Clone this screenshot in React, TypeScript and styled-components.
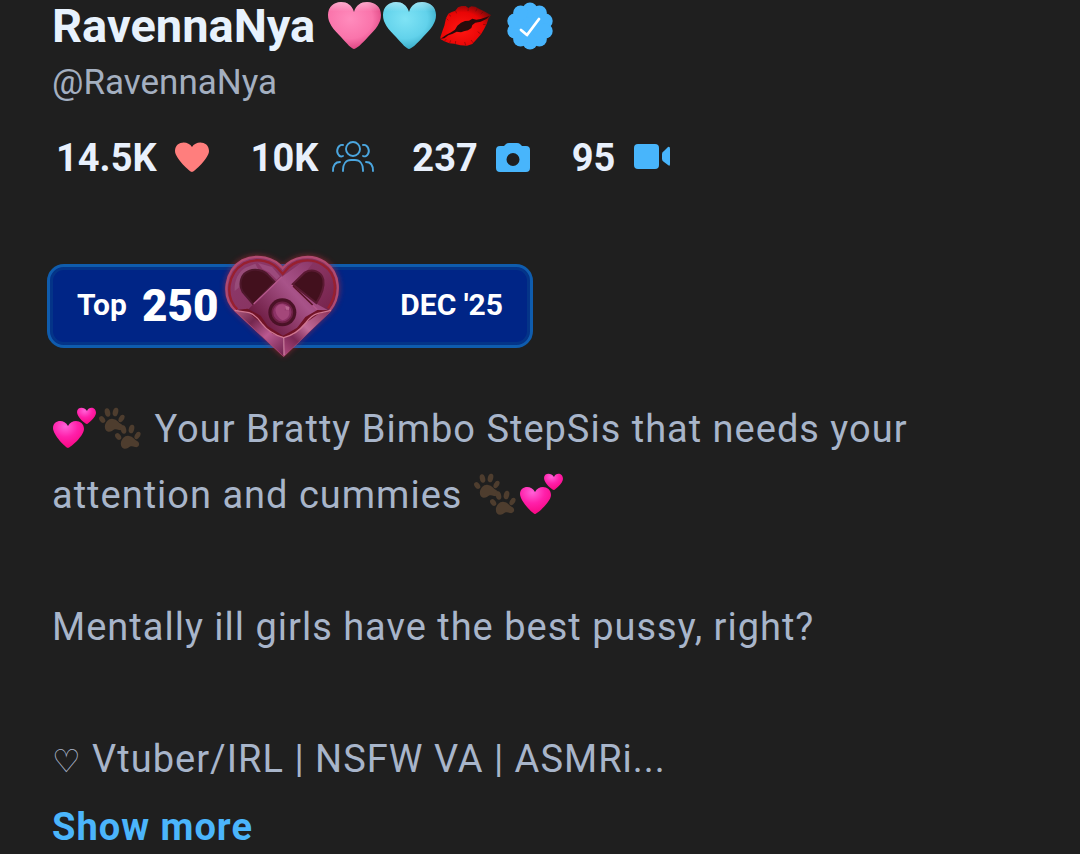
import React from 'react';
import styled, { createGlobalStyle } from 'styled-components';

const GlobalStyle = createGlobalStyle`
  body {
    margin: 0;
    background: #1f1f1f;
    color: #a8b5ca;
    font-family: Roboto, 'Noto Sans', 'DejaVu Sans', sans-serif;
  }
`;

const Profile = styled.main`
  padding: 0 47px;
`;

const Header = styled.header`
  padding: 0 5px;
`;

const Name = styled.h1`
  display: flex;
  align-items: center;
  margin: 0;
  color: #e8f2fd;
  font-size: 47px;
  line-height: 52px;
  font-weight: 700;
`;

const NameEmoji = styled.span`
  display: flex;
  margin: 0 14px 0 12px;
`;

const Handle = styled.p`
  margin: 0;
  color: #a4afc0;
  font-size: 35px;
  line-height: 62px;
`;

const Stats = styled.ul`
  display: flex;
  flex-wrap: wrap;
  gap: 0 38px;
  margin: 18px 0 0;
  padding: 0 4px;
  list-style: none;
`;

const Stat = styled.li`
  display: flex;
  align-items: center;
  gap: 14px;
  color: #e8f0fc;
  font-size: 38px;
  line-height: 52px;
  font-weight: 700;
`;

const StatIcon = styled.svg<{ $color: string }>`
  width: 42px;
  height: 36px;
  color: ${(p) => p.$color};
`;

const RankBadge = styled.section`
  box-sizing: border-box;
  display: flex;
  align-items: center;
  max-width: 486px;
  height: 84px;
  margin-top: 80px;
  padding: 0 27px;
  border: 3px solid #0f5cad;
  border-radius: 17px;
  background: #002586;
  box-shadow: inset 0 0 0 3px #043488;
  color: #fff;
  font-weight: 700;
`;

const RankLabel = styled.span`
  padding-bottom: 4px;
  font-size: 30px;
`;

const RankNumber = styled.strong`
  margin-left: 15px;
  font-size: 44px;
`;

const RankDate = styled(RankLabel)`
  margin-left: auto;
`;

const Gem = styled.svg`
  flex: none;
  width: 150px;
  height: 130px;
  margin: -24px -8px;
`;

const Bio = styled.section`
  margin-top: 48px;
  padding: 0 5px;
  font-size: 38px;
  line-height: 66px;
  letter-spacing: 1px;
`;

const BioText = styled.p`
  margin: 0 0 66px;

  &:last-of-type {
    margin-bottom: 0;
  }
`;

const SmallSymbol = styled.span`
  font-size: 32px;
`;

const Emoji = styled.svg`
  width: 45px;
  height: 44px;
  margin-right: 1px;
  vertical-align: -9px;
`;

const ShowMore = styled.a`
  display: inline-block;
  margin-top: 8px;
  color: #4bb5fb;
  font-weight: 700;
  line-height: 48px;
  text-decoration: none;
`;

const HEART =
  'M27 49C25 49 20 44 14 37C6 29 1 23 1 15C1 7 7 2 14 2C20 2 25 5 27 12C29 5 34 2 40 2C48 2 54 7 54 15C54 23 49 29 41 37C35 44 29 49 27 49Z';

function HeartEmoji({ id, label, colors }: { id: string; label: string; colors: string[] }) {
  return (
    <svg width="55" height="52" viewBox="0 0 55 52" role="img" aria-label={label}>
      <defs>
        <radialGradient id={id} cx="0.42" cy="0.36" r="0.7">
          <stop offset="0" stopColor={colors[0]} />
          <stop offset="0.6" stopColor={colors[1]} />
          <stop offset="1" stopColor={colors[2]} />
        </radialGradient>
        <linearGradient id={`${id}-shine`} x1="0" y1="0" x2="0" y2="1">
          <stop offset="0" stopColor="#fff" stopOpacity="0.4" />
          <stop offset="0.2" stopColor="#fff" stopOpacity="0" />
        </linearGradient>
      </defs>
      <path d={HEART} fill={`url(#${id})`} />
      <path d={HEART} fill={`url(#${id}-shine)`} />
    </svg>
  );
}

function KissEmoji() {
  return (
    <svg width="55" height="52" viewBox="352 0 165 156" role="img" aria-label="kiss mark">
      <defs>
        <radialGradient id="kiss" cx="0.42" cy="0.6" r="0.68">
          <stop offset="0" stopColor="#ff1712" />
          <stop offset="0.65" stopColor="#e80505" />
          <stop offset="1" stopColor="#720909" />
        </radialGradient>
      </defs>
      <path
        fill="url(#kiss)"
        d="M362 112L368 94L374 77L379 55L386 41L396 36L407 32L415 22L426 18L438 18L446 24L455 19L467 20L479 27L492 33L504 40L514 45L507 55L501 72L493 88L484 103L471 118L458 132L442 137L422 136L403 131L389 130L374 124L363 118Z"
      />
      <path
        fill="#290b0b"
        d="M363 116L379 105L392 98L406 89L413 77L424 68L436 63L448 62L458 56L470 59L483 57L499 52L511 47L500 57L483 65L467 68L458 75L455 84L445 91L435 93L424 97L411 95L399 101L386 106L374 115Z"
      />
      <path
        fill="none"
        stroke="#5f0808"
        strokeWidth="1.5"
        d="M380 55L386 61M387 43L394 49M408 33L411 40M446 25L445 33M473 25L468 34M491 35L483 42M375 123L380 117M390 129L393 121M407 132L408 123M438 136L435 126M461 129L454 120M483 102L474 95M498 74L490 73"
      />
    </svg>
  );
}

function VerifiedIcon() {
  const lobes = Array.from({ length: 10 }, (_, i) => (i * Math.PI) / 5);
  return (
    <svg width="48" height="52" viewBox="0 0 48 52" role="img" aria-label="Verified">
      <g fill="#48b5fd">
        <circle cx="24" cy="26" r="19" />
        {lobes.map((a) => (
          <circle key={a} cx={24 + Math.sin(a) * 16} cy={26 - Math.cos(a) * 16} r="7.5" />
        ))}
      </g>
      <path d="M15 30L21 35L33 19" fill="none" stroke="#fff" strokeWidth="2.8" strokeLinecap="round" strokeLinejoin="round" />
    </svg>
  );
}

function TwoHearts() {
  return (
    <Emoji viewBox="0 0 45 44" role="img" aria-label="two hearts">
      <defs>
        <radialGradient id="pink" cx="0.4" cy="0.2" r="0.8">
          <stop offset="0" stopColor="#ff62d8" />
          <stop offset="0.5" stopColor="#ff20aa" />
          <stop offset="1" stopColor="#f90783" />
        </radialGradient>
      </defs>
      <path fill="url(#pink)" d="M16 41C14 41 1 28 1 21C1 13 12 11 16 19C20 11 32 13 32 22C32 29 18 41 16 41Z" />
      <path fill="url(#pink)" d="M35 17C33 17 25 10 25 5C25 0 32-1 35 4C37-1 44 0 44 6C44 10 36 17 35 17Z" />
    </Emoji>
  );
}

function Paw() {
  return (
    <>
      <path d="M6 18C7 15 10 11 14 12C17 12 19 15 22 17C26 19 24 24 20 23C17 22 15 22 13 24C9 26 5 24 6 18Z" />
      <ellipse cx="3.2" cy="12.5" rx="2.6" ry="3.8" transform="rotate(-35 3.2 12.5)" />
      <ellipse cx="8.5" cy="5.5" rx="2.7" ry="4.4" transform="rotate(-12 8.5 5.5)" />
      <ellipse cx="16.5" cy="5" rx="2.7" ry="4.4" transform="rotate(14 16.5 5)" />
      <ellipse cx="22.5" cy="11.5" rx="2.5" ry="4" transform="rotate(32 22.5 11.5)" />
    </>
  );
}

function Paws() {
  return (
    <Emoji viewBox="0 0 45 44" role="img" aria-label="paw prints">
      <g fill="#4e3d2e">
        <g transform="translate(1 0)">
          <Paw />
        </g>
        <g transform="translate(17 17)">
          <Paw />
        </g>
      </g>
    </Emoji>
  );
}

function HeartGem() {
  return (
    <Gem viewBox="0 0 450 390" aria-hidden="true">
      <defs>
        <filter id="glow" x="-20%" y="-20%" width="140%" height="140%">
          <feGaussianBlur stdDeviation="9" />
        </filter>
        <linearGradient id="gemBody" x1="0" y1="0" x2="1" y2="1">
          <stop offset="0" stopColor="#8f3a6c" />
          <stop offset="0.5" stopColor="#86325f" />
          <stop offset="1" stopColor="#641338" />
        </linearGradient>
        <linearGradient id="gemStrap" gradientUnits="userSpaceOnUse" x1="320" y1="70" x2="140" y2="230">
          <stop offset="0" stopColor="#8b3768" />
          <stop offset="0.45" stopColor="#a85389" />
          <stop offset="1" stopColor="#6d1c42" />
        </linearGradient>
        <linearGradient id="gemLeft" x1="0" y1="0" x2="1" y2="1">
          <stop offset="0" stopColor="#ad5b80" />
          <stop offset="0.3" stopColor="#74274f" />
          <stop offset="0.6" stopColor="#ba5990" />
          <stop offset="1" stopColor="#6d214b" />
        </linearGradient>
        <linearGradient id="gemRight" x1="1" y1="0" x2="0" y2="1">
          <stop offset="0" stopColor="#8b3158" />
          <stop offset="0.45" stopColor="#c16b98" />
          <stop offset="0.7" stopColor="#7b2855" />
          <stop offset="1" stopColor="#b14d80" />
        </linearGradient>
      </defs>
      <path d="M221 346L75 209C30 166 43 86 94 57C141 32 194 49 218 80C248 43 303 34 345 59C397 94 399 166 361 210Z" fill="#c12639" opacity="0.7" filter="url(#glow)" />
      <path d="M221 343L77 210C31 166 45 88 97 58C142 36 193 51 218 82C248 46 303 37 344 63C393 96 394 166 359 210Z" fill="url(#gemBody)" stroke="#b04a70" strokeWidth="7" />
      <path d="M82 205C43 166 53 96 101 68C144 47 188 61 211 91L218 99L226 90C251 56 302 48 339 72C382 99 385 158 354 202" fill="none" stroke="#98202f" strokeWidth="7" />
      <path d="M106 80L136 68L144 84L120 90L96 112L86 140L74 150C72 120 84 94 106 80Z" fill="#a05a86" opacity="0.6" />
      <path d="M144 66L158 84L179 95L200 116L210 106L186 78Z" fill="#9c4a7c" />
      <path d="M130 190L98 153C84 127 94 98 117 90C137 82 162 88 175 103L194 123Z" fill="#42101d" stroke="#4e182b" strokeWidth="6" />
      <path d="M262 74L218 106L130 190L113 207L155 245L219 286L281 248L325 214L352 206L322 190L247 130L290 90L308 66C290 60 274 64 262 74Z" fill="url(#gemStrap)" />
      <path d="M248 130L284 95C307 81 335 92 340 116C344 139 337 158 319 186Z" fill="#42101d" stroke="#5a1a32" strokeWidth="6" />
      <path d="M131 189L216 107M244 132L322 206" fill="none" stroke="#b5588b" strokeWidth="4" />
      <path d="M249 135L308 192" stroke="#561325" strokeWidth="5" />
      <path d="M84 206L113 203L152 224L173 255L219 284L261 261L286 228L322 207L354 208L310 250L221 306L135 250Z" fill="#711327" />
      <circle cx="217" cy="214" r="42" fill="#4a1226" />
      <circle cx="217" cy="214" r="30" fill="#8c3266" stroke="#6e2145" strokeWidth="5" />
      <path d="M196 207C199 190 218 185 229 195L224 208L237 207C242 223 232 235 218 238C205 232 198 220 196 207Z" fill="#a4477a" />
      <path d="M226 194L238 198L237 207L227 206Z" fill="#b8658f" />
      <path d="M74 208L117 216L153 247L188 278L221 289L221 346Z" fill="url(#gemLeft)" />
      <path d="M365 208L325 219L286 246L250 281L221 289L221 346Z" fill="url(#gemRight)" />
      <path d="M74 208L117 215Q138 222 155 247Q178 277 221 290Q260 280 287 246Q304 222 324 217L363 208" fill="none" stroke="#cf7792" strokeWidth="4" />
      <path d="M221 291L222 343" stroke="#e3a0b8" strokeWidth="4" opacity="0.6" />
    </Gem>
  );
}

export default function App() {
  return (
    <>
      <GlobalStyle />
      <Profile>
        <Header>
          <Name>
            RavennaNya
            <NameEmoji>
              <HeartEmoji id="pinkHeart" label="pink heart" colors={['#ff8cbd', '#fa74ab', '#d83c79']} />
              <HeartEmoji id="blueHeart" label="light blue heart" colors={['#7fe3f5', '#62d2eb', '#2fa3bf']} />
              <KissEmoji />
            </NameEmoji>
            <VerifiedIcon />
          </Name>
          <Handle>@RavennaNya</Handle>
          <Stats>
            <Stat>
              14.5K
              <StatIcon $color="#ff7e7d" viewBox="0 0 42 36" role="img" aria-label="likes">
                <path fill="currentColor" d="M21 32C19 32 4 18 4 11C4 1 17 0 21 7C25 0 38 1 38 11C38 18 23 32 21 32Z" />
              </StatIcon>
            </Stat>
            <Stat>
              10K
              <StatIcon $color="#4ba6df" viewBox="0 0 42 36" role="img" aria-label="followers">
                <g fill="none" stroke="currentColor" strokeWidth="1.9" strokeLinecap="round">
                  <circle cx="21" cy="9" r="7" />
                  <path d="M11 31V30C11 24 14 20 19 20H23C28 20 31 24 31 30V31M11 5C6 4 4 11 6 14C7 16 9 17 11 16M31 5C36 4 38 11 36 14C35 16 33 17 31 16M1 31C1 26 3 22 8 22M41 31C41 26 39 22 34 22" />
                </g>
              </StatIcon>
            </Stat>
            <Stat>
              237
              <StatIcon $color="#48b5fb" viewBox="0 0 42 36" role="img" aria-label="photos">
                <path
                  fill="currentColor"
                  fillRule="evenodd"
                  d="M8 6H12L14 4Q15 3 17 3H25Q27 3 28 4L30 6H34Q38 6 38 10V28Q38 32 34 32H8Q4 32 4 28V10Q4 6 8 6ZM21 13A6.5 6.5 0 1 0 21 26A6.5 6.5 0 1 0 21 13Z"
                />
              </StatIcon>
            </Stat>
            <Stat>
              95
              <StatIcon $color="#48b5fb" viewBox="0 0 42 36" role="img" aria-label="videos">
                <rect x="5" y="4" width="25" height="25" rx="4" fill="currentColor" />
                <path fill="currentColor" d="M33 14Q33 12 35 11L39 7Q41 6 41 9V24Q41 27 39 25L35 22Q33 21 33 19Z" />
              </StatIcon>
            </Stat>
          </Stats>
        </Header>

        <RankBadge>
          <RankLabel>Top</RankLabel>
          <RankNumber>250</RankNumber>
          <HeartGem />
          <RankDate as="time" dateTime="2025-12">
            DEC '25
          </RankDate>
        </RankBadge>

        <Bio>
          <BioText>
            <TwoHearts />
            <Paws /> Your Bratty Bimbo StepSis that needs your
            <br />
            attention and cummies <Paws />
            <TwoHearts />
          </BioText>
          <BioText>Mentally ill girls have the best pussy, right?</BioText>
          <BioText>
            <SmallSymbol>♡</SmallSymbol> Vtuber/IRL | NSFW VA | ASMRi...
          </BioText>
          <ShowMore href="#more">Show more</ShowMore>
        </Bio>
      </Profile>
    </>
  );
}
